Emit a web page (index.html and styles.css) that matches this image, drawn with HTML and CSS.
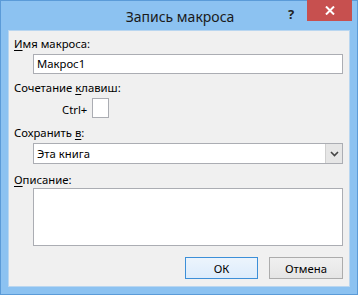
FILE: index.html
```html
<!DOCTYPE html>
<html lang="ru">
<head>
    <meta charset="UTF-8">
    <title>Запись макроса</title>
    <link rel="stylesheet" href="styles.css">
</head>
<body>
    <div class="window">
        <div class="titlebar">
            <span class="title">Запись макроса</span>
            <span class="help">?</span>
            <span class="close">
                <svg width="10" height="9" viewBox="0 0 10 9"><path d="M1 0.5 L9 8.5 M9 0.5 L1 8.5" stroke="#fff" stroke-width="2"/></svg>
            </span>
        </div>
        <div class="client">
            <div class="label l1"><u>И</u>мя макроса:</div>
            <div class="field name">Макрос1</div>

            <div class="label l2">Сочетание <u>к</u>лавиш:</div>
            <div class="keyrow">
                <span>Ctrl+</span>
                <div class="keybox"></div>
            </div>

            <div class="label l3">Сохранить <u>в</u>:</div>
            <div class="combo">
                <span class="combo-text">Эта книга</span>
                <span class="combo-btn">
                    <svg width="9" height="6" viewBox="0 0 9 6"><path d="M1 1 L4.5 4.5 L8 1" fill="none" stroke="#444" stroke-width="1.6"/></svg>
                </span>
            </div>

            <div class="label l4"><u>О</u>писание:</div>
            <div class="field desc"></div>

            <div class="buttons">
                <button class="btn default">ОК</button>
                <button class="btn">Отмена</button>
            </div>
        </div>
    </div>
</body>
</html>
```

FILE: styles.css
```css
*, *:before, *:after{
    margin: 0;
    padding: 0;
    box-sizing: border-box;
}
body{
    width: 358px;
    height: 295px;
    font-family: "Noto Sans", "Open Sans", sans-serif;
    font-size: 11.3px;
    color: #000;
    background: #fff;
}
.window{
    width: 358px;
    height: 295px;
    background: #8cc2f1;
    border: 1px solid #5b9bd8;
    display: flex;
    flex-direction: column;
}
.titlebar{
    position: relative;
    height: 29px;
    display: flex;
    justify-content: center;
    align-items: center;
}
.title{
    font-size: 14px;
    color: #1a1a1a;
    margin-left: 2px;
    margin-top: 2px;
}
.help{
    position: absolute;
    left: 287px;
    top: 4px;
    font-weight: bold;
    font-size: 13px;
    color: #222;
}
.close{
    position: absolute;
    left: 306px;
    top: -1px;
    width: 45px;
    height: 21px;
    background: #c7504f;
    display: flex;
    justify-content: center;
    align-items: center;
}
.client{
    margin: 0 7px 7px 7px;
    flex: 1;
    background: #f0f0f0;
    border: 1px solid #b9d6f0;
    padding: 5px 6px 0 5px;
    display: flex;
    flex-direction: column;
}
.label{
    height: 16px;
    line-height: 16px;
}
.label u{
    text-decoration-thickness: 1px;
    text-underline-offset: 2px;
}
.field{
    margin-left: 19px;
    background: #fff;
    border: 1px solid #abadb3;
    padding: 0 3px;
}
.l1{ margin-bottom: 2px; }
.name{
    height: 20px;
    line-height: 18px;
}
.l2{ margin-top: 6px; margin-bottom: 2px; }
.keyrow{
    display: flex;
    align-items: center;
    padding-left: 48px;
    gap: 5px;
}
.keyrow span{
    margin-top: 2px;
}
.keybox{
    width: 17px;
    height: 20px;
    background: #fff;
    border: 1px solid #abadb3;
}
.l3{ margin-top: 7px; margin-bottom: 2px; }
.combo{
    margin-left: 19px;
    height: 21px;
    background: #fff;
    border: 1px solid #abadb3;
    display: flex;
    justify-content: space-between;
    align-items: center;
}
.combo-text{
    padding-left: 3px;
}
.combo-btn{
    width: 17px;
    height: 19px;
    background: #e6e6e6;
    border-left: 1px solid #d0d0d0;
    display: flex;
    justify-content: center;
    align-items: center;
}
.l4{ margin-top: 8px; }
.desc{
    height: 58px;
}
.buttons{
    margin-top: 11px;
    display: flex;
    justify-content: flex-end;
    gap: 11px;
}
.btn{
    font-family: inherit;
    font-size: 11.3px;
    height: 22px;
    width: 74px;
    background: linear-gradient(#f0f0f0, #e5e5e5);
    border: 1px solid #acacac;
    color: #000;
}
.btn.default{
    width: 73px;
    border-color: #3c8fd8;
    background: linear-gradient(#ecf4fc, #dcecfc);
}
```
